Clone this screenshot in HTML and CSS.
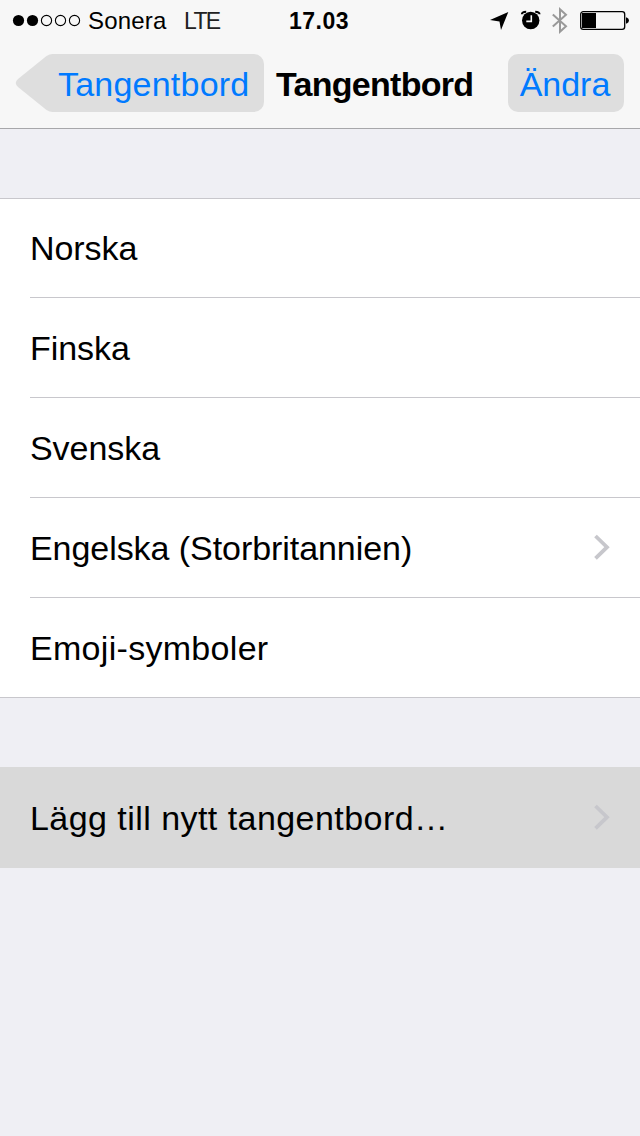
FILE: index.html
```html
<!DOCTYPE html>
<html lang="sv">
<head>
<meta charset="utf-8">
<title>Tangentbord</title>
<link rel="stylesheet" href="styles.css">
</head>
<body>
<header class="top">
  <div class="status">
    <svg class="signal" width="70" height="14" viewBox="0 0 70 14">
      <circle cx="6.5" cy="6.500" r="5.600"/><circle cx="20.500" cy="6.500" r="5.600"/>
      <g fill="none" stroke="#000" stroke-width="1.1"><circle cx="34.500" cy="6.500" r="5.100"/><circle cx="48.500" cy="6.500" r="5.100"/><circle cx="62.500" cy="6.500" r="5.100"/></g>
    </svg>
    <span class="carrier">Sonera</span>
    <span class="network">LTE</span>
    <time class="clock">17.03</time>
    <svg class="indicators" width="150" height="30" viewBox="0 0 150 30">
      <path d="M18.300 7 11 25 9.500 16.500 0 15Z"/>
      <circle cx="40.700" cy="15.500" r="8.700"/>
      <path d="M31.800 9.200Q31.900 6.800 36.200 6.700M49.600 9.200Q49.500 6.800 45.200 6.700" fill="none" stroke="#000" stroke-width="1.900"/>
      <path d="M41.300 10.200v6.200h-5" fill="none" stroke="#f7f7f7" stroke-width="1.600"/>
      <path d="M62.800 9.400 76 21.200 70 26.800V4.200L76 9.800 62.800 21.600" fill="none" stroke="#999" stroke-width="2"/>
      <rect x="90.700" y="6.700" width="44" height="17.600" rx="2.600" fill="none" stroke="#000" stroke-width="1.300"/>
      <rect x="92" y="8" width="14" height="15"/>
      <path d="M136 12.400h.8q2.200 1 2.200 3.100t-2.200 3.100h-.8Z"/>
    </svg>
  </div>
  <nav class="nav">
    <a class="back">
      <svg class="back-tip" width="40" height="58" viewBox="0 0 40 58"><path d="M40 0H37.500Q34.500 0 31.500 2L3 25Q-1.500 29 3 33L31.500 56Q34.500 58 37.500 58H40Z"/></svg>
      <span class="back-label">Tangentbord</span>
    </a>
    <h1 class="title">Tangentbord</h1>
    <a class="edit">Ändra</a>
  </nav>
</header>
<main>
  <ul class="list">
    <li class="row">Norska</li>
    <li class="row">Finska</li>
    <li class="row">Svenska</li>
    <li class="row">Engelska (Storbritannien)
      <svg class="chevron" width="18" height="28" viewBox="0 0 18 28"><path d="M1.500 2 13 13.200 1.500 24.400"/></svg></li>
    <li class="row wide">Emoji-symboler</li>
  </ul>
  <div class="add">Lägg till nytt tangentbord…
    <svg class="chevron" width="18" height="28" viewBox="0 0 18 28"><path d="M1.500 2 13 13.200 1.500 24.400"/></svg></div>
</main>
</body>
</html>
```
FILE: styles.css
```css
* { box-sizing: border-box; }
body {
  margin: 0;
  min-height: 1136px;
  background: #efeff4;
  color: #000;
  font: 34px/40px "Liberation Sans", Arial, sans-serif;
  white-space: nowrap;
}
.top {
  height: 129px;
  background: #f7f7f7;
  border-bottom: 1px solid #a7a7aa;
}
.status {
  display: flex;
  align-items: center;
  height: 41px;
  padding-left: 12px;
  font-size: 24px;
}
.signal { margin-right: 6px; }
.carrier { width: 96px; letter-spacing: 0.2px; }
.network { width: 105px; font-size: 23px; letter-spacing: -1.7px; color: #222; }
.clock { width: 201px; font-weight: bold; font-size: 23px; letter-spacing: 0.5px; }
.indicators { align-self: flex-start; margin-top: 5px; }
.nav {
  display: flex;
  align-items: center;
  margin-top: 13px;
  padding: 0 16px 0 15px;
  height: 58px;
}
.back { display: flex; width: 249px; color: #007aff; }
.back-tip { fill: #dedede; }
.back-label {
  flex: 1;
  height: 58px;
  padding-left: 3px;
  line-height: 61px;
  background: #dedede;
  border-radius: 0 10px 10px 0;
  letter-spacing: 0.22px;
}
.title {
  margin: 2px 0 0 12px;
  width: 232px;
  font-size: 34px;
  line-height: 61px;
  letter-spacing: -0.72px;
}
.edit {
  width: 116px;
  height: 58px;
  padding-right: 2px;
  line-height: 61px;
  text-align: center;
  color: #007aff;
  background: #dedede;
  border-radius: 10px;
}
.list {
  margin: 69px 0;
  padding: 0 0 0 30px;
  list-style: none;
  background: #fff;
  border-top: 1px solid #c8c7cc;
  border-bottom: 1px solid #c8c7cc;
}
.row {
  display: flex;
  align-items: center;
  justify-content: space-between;
  height: 100px;
  padding-right: 28px;
  border-bottom: 1px solid #c8c7cc;
  letter-spacing: -0.06px;
}
.row:first-child { height: 99px; }
.row:last-child { height: 99px; border-bottom: 0; }
.row.wide { letter-spacing: 0.3px; }
.chevron {
  fill: none;
  stroke: #c7c7cc;
  stroke-width: 3.8;
}
.add {
  display: flex;
  align-items: center;
  justify-content: space-between;
  height: 101px;
  padding: 0 28px 0 30px;
  background: #d9d9d9;
  letter-spacing: 0.45px;
}
```
